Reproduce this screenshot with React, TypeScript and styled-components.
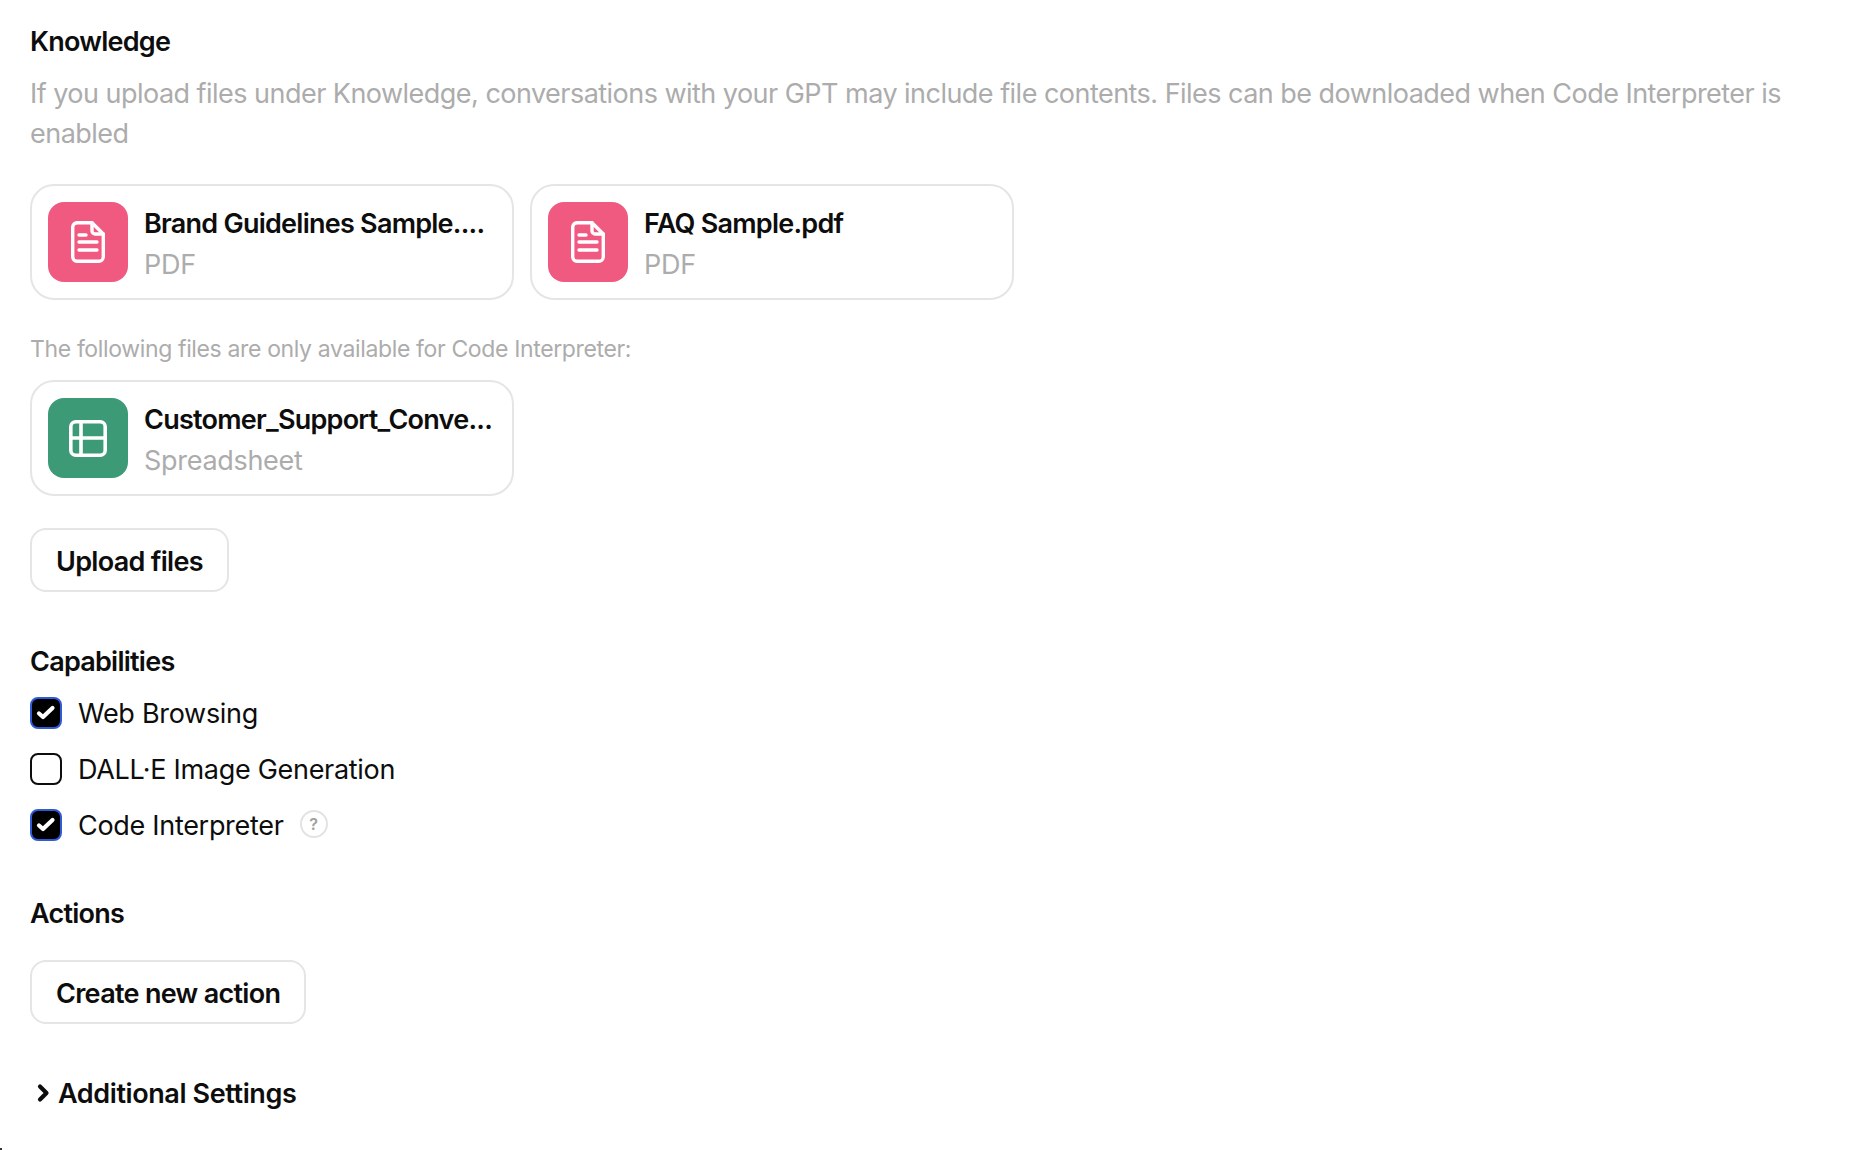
import * as React from "react";
import styled, { createGlobalStyle } from "styled-components";

const GlobalStyle = createGlobalStyle`
  html, body {
    margin: 0;
    padding: 0;
    background: #fff;
    font-family: Inter, "Liberation Sans", sans-serif;
    color: #0d0d0d;
  }
`;

const Page = styled.div`
  position: relative;
  width: 1866px;
  height: 1150px;
  box-sizing: border-box;
  padding: 22px 30px 0;
  overflow: hidden;
`;

const CornerDot = styled.div`
  position: absolute;
  left: 0;
  bottom: 0;
  width: 2px;
  height: 2px;
  background: #333;
`;

const Title = styled.div<{ $mt?: number; $mb?: number }>`
  font-size: 27px;
  line-height: 40px;
  font-weight: 600;
  letter-spacing: -0.75px;
  margin-top: ${(p) => p.$mt ?? 0}px;
  margin-bottom: ${(p) => p.$mb ?? 0}px;
`;

const Description = styled.div`
  font-size: 27px;
  line-height: 40px;
  font-weight: 400;
  letter-spacing: -0.53px;
  color: #acacac;
  margin-top: 12px;
  margin-bottom: 30px;
  width: 1800px;
`;

const CardRow = styled.div`
  display: flex;
  gap: 16px;
`;

const Card = styled.div`
  width: 484px;
  height: 116px;
  box-sizing: border-box;
  border: 2px solid #e5e5e5;
  border-radius: 24px;
  padding: 16px;
  display: flex;
  align-items: center;
  gap: 16px;
`;

const IconBox = styled.div<{ $color: string }>`
  width: 80px;
  height: 80px;
  flex: none;
  border-radius: 16px;
  background: ${(p) => p.$color};
  display: flex;
  align-items: center;
  justify-content: center;
`;

const CardText = styled.div`
  min-width: 0;
  flex: 1;
  padding-top: 4px;
`;

const CardName = styled.div`
  font-size: 27px;
  line-height: 40px;
  font-weight: 600;
  letter-spacing: -0.75px;
  white-space: nowrap;
`;

const CardType = styled.div`
  font-size: 27px;
  line-height: 40px;
  margin-top: 1px;
  letter-spacing: -0.3px;
  color: #acacac;
`;

const Note = styled.div`
  font-size: 23px;
  line-height: 32px;
  letter-spacing: -0.36px;
  color: #acacac;
  margin-top: 33px;
  margin-bottom: 15px;
`;

const OutlineButton = styled.div<{ $mt: number }>`
  display: inline-flex;
  align-items: center;
  height: 64px;
  box-sizing: border-box;
  padding: 2px 24px 0;
  border: 2px solid #e5e5e5;
  border-radius: 16px;
  font-size: 27px;
  font-weight: 600;
  letter-spacing: -0.7px;
  margin-top: ${(p) => p.$mt}px;
`;

const OptionRow = styled.div`
  display: flex;
  align-items: center;
  height: 56px;
`;

const Check = styled.div<{ $on?: boolean }>`
  width: 32px;
  height: 32px;
  box-sizing: border-box;
  border-radius: 8px;
  border: ${(p) => (p.$on ? "2.5px solid #2f5bd6" : "2px solid #0d0d0d")};
  background: ${(p) => (p.$on ? "#000" : "#fff")};
  display: flex;
  align-items: center;
  justify-content: center;
  margin-right: 16px;
`;

const OptionLabel = styled.span`
  font-size: 27px;
  letter-spacing: -0.3px;
`;

const Help = styled.span`
  width: 28px;
  height: 28px;
  box-sizing: border-box;
  border: 2px solid #e3e3e3;
  border-radius: 50%;
  margin-left: 16px;
  margin-top: -2px;
  display: flex;
  align-items: center;
  justify-content: center;
  font-size: 16px;
  font-weight: 600;
  color: #a0a0a0;
`;

const Advanced = styled.div`
  display: flex;
  align-items: center;
  margin-top: 49px;
  padding-left: 7px;
  height: 40px;
  gap: 8px;
  font-size: 27px;
  font-weight: 600;
  letter-spacing: -0.4px;
`;

const FileIcon = () => (
  <svg width="34" height="42" viewBox="0 0 34 42" fill="none" stroke="#fff" strokeWidth="3.4" strokeLinejoin="round" strokeLinecap="round">
    <path d="M6 1.7h15L32.3 13v23a4.5 4.5 0 0 1-4.5 4.3H6A4.5 4.5 0 0 1 1.7 36V6A4.5 4.5 0 0 1 6 1.7z" />
    <path d="M21 1.7V10a3 3 0 0 0 3 3h8.3" />
    <path d="M8 14h7M8 21h18M8 29h18" />
  </svg>
);

const SheetIcon = () => (
  <svg width="38" height="37" viewBox="0 0 38 37" fill="none" stroke="#fff" strokeWidth="3.6" strokeLinejoin="round">
    <rect x="1.8" y="1.8" width="34.4" height="33.4" rx="5" />
    <path d="M12 1.8v33.4M1.8 18h34.4" />
  </svg>
);

const Tick = () => (
  <svg width="20" height="16" viewBox="0 0 20 16" fill="none" stroke="#fff" strokeWidth="4.2" strokeLinecap="round" strokeLinejoin="round">
    <path d="M3 8.5l4 3.5 9.5-9" />
  </svg>
);

const Chevron = () => (
  <svg width="13" height="20" viewBox="0 0 13 20" fill="none" stroke="#0d0d0d" strokeWidth="4.2" strokeLinecap="round" strokeLinejoin="round">
    <path d="M3 3.5l6.5 6.5L3 16.5" />
  </svg>
);

export default function App() {
  return (
    <Page>
      <GlobalStyle />
      <Title>Knowledge</Title>
      <Description>
        If you upload files under Knowledge, conversations with your GPT may include file contents. Files can be
        downloaded when Code Interpreter is enabled
      </Description>
      <CardRow>
        <Card>
          <IconBox $color="#f15a80">
            <FileIcon />
          </IconBox>
          <CardText>
            <CardName>Brand Guidelines Sample....</CardName>
            <CardType>PDF</CardType>
          </CardText>
        </Card>
        <Card>
          <IconBox $color="#f15a80">
            <FileIcon />
          </IconBox>
          <CardText>
            <CardName>FAQ Sample.pdf</CardName>
            <CardType>PDF</CardType>
          </CardText>
        </Card>
      </CardRow>
      <Note>The following files are only available for Code Interpreter:</Note>
      <Card>
        <IconBox $color="#3c9b76">
          <SheetIcon />
        </IconBox>
        <CardText>
          <CardName>Customer_Support_Conve...</CardName>
          <CardType>Spreadsheet</CardType>
        </CardText>
      </Card>
      <OutlineButton $mt={32}>Upload files</OutlineButton>
      <Title $mt={50} $mb={3}>Capabilities</Title>
      <OptionRow>
        <Check $on>
          <Tick />
        </Check>
        <OptionLabel>Web Browsing</OptionLabel>
      </OptionRow>
      <OptionRow>
        <Check />
        <OptionLabel>DALL·E Image Generation</OptionLabel>
      </OptionRow>
      <OptionRow>
        <Check $on>
          <Tick />
        </Check>
        <OptionLabel>Code Interpreter</OptionLabel>
        <Help>?</Help>
      </OptionRow>
      <Title $mt={41} $mb={26}>Actions</Title>
      <OutlineButton $mt={0}>Create new action</OutlineButton>
      <Advanced>
        <Chevron />
        Additional Settings
      </Advanced>
      <CornerDot />
    </Page>
  );
}
